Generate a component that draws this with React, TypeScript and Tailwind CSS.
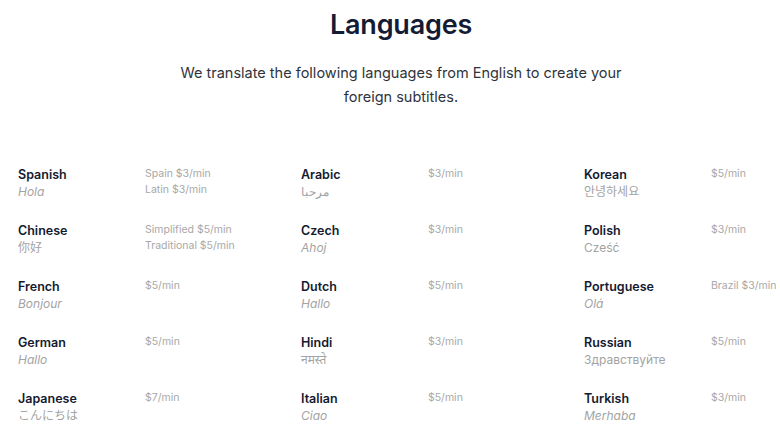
import React from "react";

type Lang = { name: string; native: string; italic: boolean; prices: string[] };

const cols: Lang[][] = [
  [
    { name: "Spanish", native: "Hola", italic: true, prices: ["Spain $3/min", "Latin $3/min"] },
    { name: "Chinese", native: "你好", italic: false, prices: ["Simplified $5/min", "Traditional $5/min"] },
    { name: "French", native: "Bonjour", italic: true, prices: ["$5/min"] },
    { name: "German", native: "Hallo", italic: true, prices: ["$5/min"] },
    { name: "Japanese", native: "こんにちは", italic: false, prices: ["$7/min"] },
  ],
  [
    { name: "Arabic", native: "مرحبا", italic: false, prices: ["$3/min"] },
    { name: "Czech", native: "Ahoj", italic: true, prices: ["$3/min"] },
    { name: "Dutch", native: "Hallo", italic: true, prices: ["$5/min"] },
    { name: "Hindi", native: "नमस्ते", italic: false, prices: ["$3/min"] },
    { name: "Italian", native: "Ciao", italic: true, prices: ["$5/min"] },
  ],
  [
    { name: "Korean", native: "안녕하세요", italic: false, prices: ["$5/min"] },
    { name: "Polish", native: "Cześć", italic: false, prices: ["$3/min"] },
    { name: "Portuguese", native: "Olá", italic: true, prices: ["Brazil $3/min"] },
    { name: "Russian", native: "Здравствуйте", italic: false, prices: ["$5/min"] },
    { name: "Turkish", native: "Merhaba", italic: true, prices: ["$3/min"] },
  ],
];

function Item({ l }: { l: Lang }) {
  return (
    <div className="flex h-[56px]">
      <div className="w-[127px] shrink-0">
        <div className="text-[12.5px] leading-[17px] font-semibold text-[#131a30]">{l.name}</div>
        <div
          className={
            "text-[12px] leading-[17px] text-[#a3a3a3] " + (l.italic ? "italic" : "not-italic")
          }
        >
          {l.native}
        </div>
      </div>
      <div className="text-[10.5px] leading-[16px] text-[#a8a8a8] whitespace-nowrap">
        {l.prices.map((p) => (
          <div key={p}>{p}</div>
        ))}
      </div>
    </div>
  );
}

export default function App() {
  return (
    <div
      className="w-[780px] h-[426px] bg-white overflow-hidden"
      style={{ fontFamily: 'Inter, "Noto Sans", "Noto Sans CJK SC", "Noto Sans CJK JP", "Noto Sans CJK KR", sans-serif' }}
    >
      <div className="pl-[22px]">
        <h1 className="pt-[7px] text-center text-[27px] leading-[36px] font-semibold text-[#141c34] tracking-[-0.2px]">
          Languages
        </h1>
        <p className="mx-auto mt-[18px] max-w-[460px] text-center text-[14.5px] leading-[24px] text-[#2f333b]">
          We translate the following languages from English to create your foreign subtitles.
        </p>
      </div>
      <div className="mt-[57px] pl-[18px] flex">
        {cols.map((c, i) => (
          <div key={i} className="w-[283px] shrink-0 flex flex-col">
            {c.map((l) => (
              <Item key={l.name} l={l} />
            ))}
          </div>
        ))}
      </div>
    </div>
  );
}
